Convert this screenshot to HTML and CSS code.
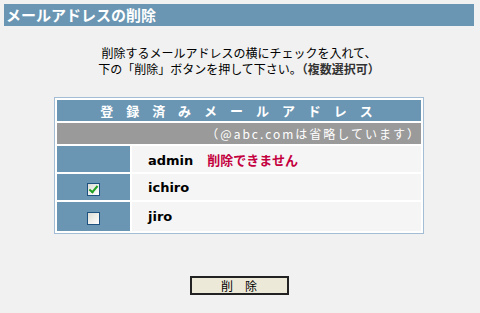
FILE: index.html
```html
<!DOCTYPE html>
<html lang="ja">
<head>
  <meta charset="UTF-8">
  <title>メールアドレスの削除</title>
  <link rel="stylesheet" href="styles.css">
</head>
<body>
  <h1 class="title">メールアドレスの削除</h1>
  <p class="guide">
    削除するメールアドレスの横にチェックを入れて、<br>
    下の「削除」ボタンを押して下さい。<b>（複数選択可）</b>
  </p>

  <table class="list">
    <tr>
      <th colspan="2" class="head">登 録 済 み メ ー ル ア ド レ ス</th>
    </tr>
    <tr>
      <td colspan="2" class="note">（@abc.comは省略しています）</td>
    </tr>
    <tr>
      <td class="check"></td>
      <td class="name">admin<span class="locked">削除できません</span></td>
    </tr>
    <tr>
      <td class="check"><input type="checkbox" checked></td>
      <td class="name">ichiro</td>
    </tr>
    <tr>
      <td class="check last"><input type="checkbox"></td>
      <td class="name">jiro</td>
    </tr>
  </table>

  <div class="actions">
    <button>削&emsp;除</button>
  </div>
</body>
</html>
```

FILE: styles.css
```css
body {
  margin: 0;
  padding: 4px 6px 0 4px;
  background-color: #f1f1f1;
  font-family: "Noto Sans CJK JP", "DejaVu Sans", sans-serif;
  font-size: 12px;
  color: #000;
}
.title {
  margin: 0;
  height: 22px;
  line-height: 22px;
  padding-left: 2px;
  background-color: #6a96b3;
  color: #fff;
  font-size: 15px;
  font-weight: bold;
}
.guide {
  margin: 19px 0 0;
  text-align: center;
  line-height: 16px;
  font-size: 12px;
}
.guide b {
  color: #333;
}
.list {
  margin: 20px auto 0;
  width: 370px;
  border: 1px solid #a3bdd4;
  border-spacing: 2px;
  background-color: #fff;
}
.list td, .list th {
  padding: 0;
}
.head {
  height: 21px;
  background-color: #6a96b3;
  color: #fff;
  font-size: 13px;
  font-weight: bold;
  letter-spacing: 5px;
  text-align: center;
}
.note {
  height: 21px;
  background-color: #9a9a9a;
  color: #fff;
  font-size: 12px;
  letter-spacing: 2px;
  text-align: right;
}
.check {
  width: 73px;
  height: 26px;
  background-color: #6a96b3;
  text-align: center;
}
.check.last {
  height: 29px;
}
.check input {
  appearance: none;
  position: relative;
  margin: 0;
  width: 13px;
  height: 13px;
  border: 1px solid #1c5180;
  background: linear-gradient(135deg, #dcdcd6, #fff);
  vertical-align: middle;
}
.check input:checked::after {
  content: "";
  position: absolute;
  left: 3px;
  top: 0;
  width: 3px;
  height: 7px;
  border: solid #21a121;
  border-width: 0 2px 2px 0;
  transform: rotate(40deg);
}
.name {
  background-color: #f5f5f5;
  padding-left: 16px !important;
  font-family: "DejaVu Sans", "Noto Sans CJK JP", sans-serif;
  font-size: 13px;
  font-weight: bold;
}
.locked {
  margin-left: 14px;
  color: #c4003f;
  font-family: "Noto Sans CJK JP", sans-serif;
}
.actions {
  margin-top: 42px;
  text-align: center;
}
.actions button {
  width: 99px;
  height: 19px;
  padding: 0;
  border: 2px solid #222;
  background-color: #ece9d8;
  font-family: "Noto Sans CJK JP", sans-serif;
  font-size: 12px;
  line-height: 14px;
}
```
